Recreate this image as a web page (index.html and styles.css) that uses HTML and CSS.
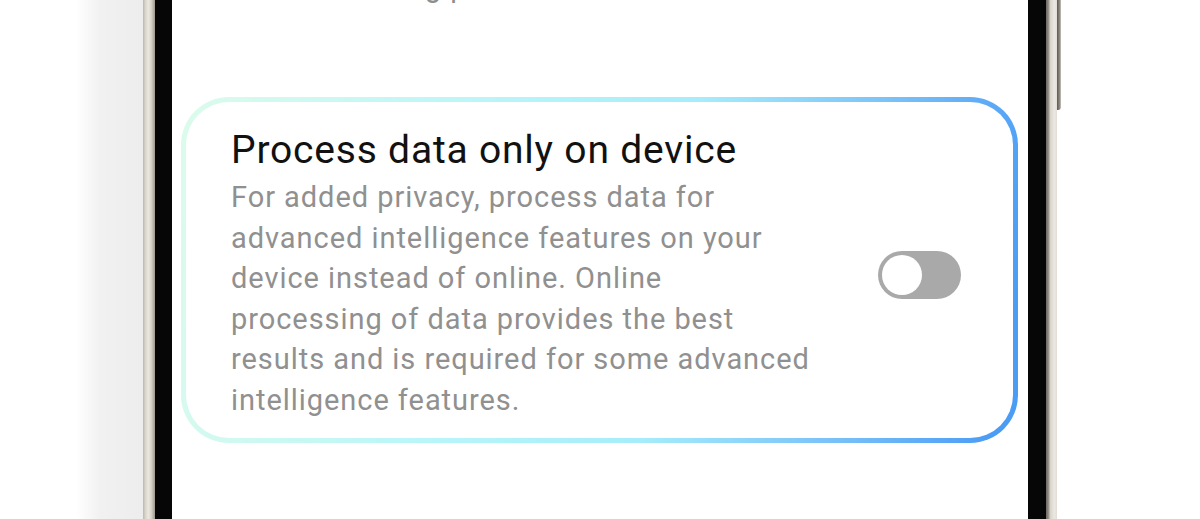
FILE: index.html
```html
<!DOCTYPE html>
<html lang="en">
<head>
<meta charset="utf-8">
<title>Process data only on device</title>
<link rel="stylesheet" href="styles.css">
</head>
<body>
<div class="stage">
  <div class="backdrop-left"></div>
  <div class="rail rail-left"></div>
  <div class="bezel bezel-left"></div>
  <main class="screen">
    <p class="prev-text">Enable learning processes on the device.</p>
    <section class="card">
      <div class="card-text">
        <h1 class="card-title">Process data only on device</h1>
        <p class="card-desc">For added privacy, process data for<br>advanced intelligence features on your<br>device instead of online. Online<br>processing of data provides the best<br>results and is required for some advanced<br>intelligence features.</p>
      </div>
      <div class="toggle" role="switch" aria-checked="false">
        <span class="toggle-thumb"></span>
      </div>
    </section>
  </main>
  <div class="bezel bezel-right"></div>
  <div class="rail rail-right"></div>
  <div class="side-right">
    <div class="side-button"></div>
  </div>
</div>
</body>
</html>
```

FILE: styles.css
```css
html, body {
  margin: 0;
  padding: 0;
  background: #ffffff;
}

.stage {
  display: flex;
  width: 1200px;
  height: 519px;
  overflow: hidden;
  font-family: Roboto, "Liberation Sans", sans-serif;
}

.backdrop-left {
  width: 143px;
  flex: none;
  background: linear-gradient(to right, #ffffff 0, #ffffff 76px, #f1f1f1 100px, #ededed 143px);
}

.rail {
  flex: none;
}

.rail-left {
  width: 12px;
  background: linear-gradient(to right, #bcb7ad 0%, #d9d5cc 20%, #ebe8e1 45%, #d6d1c7 70%, #9c978d 100%);
}

.bezel {
  flex: none;
  background: #060606;
}

.bezel-left {
  width: 17px;
}

.bezel-right {
  width: 18px;
}

.rail-right {
  width: 11px;
  background: linear-gradient(to right, #6c6861 0%, #8d8880 20%, #d8d4cb 40%, #ebe8e2 75%, #e2ded6 100%);
}

.side-right {
  width: 143px;
  flex: none;
  background: #ffffff;
}

.side-button {
  width: 4px;
  height: 110px;
  border-radius: 0 0 3px 0;
  background: linear-gradient(to right, #5e5a53 0%, #8a857c 60%, #c9c5bd 100%);
}

.screen {
  width: 856px;
  flex: none;
  box-sizing: border-box;
  padding: 0 10px 0 9px;
  background: #ffffff;
}

.prev-text {
  margin: -33px 0 0 0;
  padding-left: 50px;
  font-size: 29px;
  line-height: 40px;
  letter-spacing: 0.9px;
  color: #8e8e8e;
  white-space: nowrap;
}

.card {
  margin-top: 90px;
  height: 346px;
  box-sizing: border-box;
  display: flex;
  align-items: flex-start;
  padding: 24px 52px 18px 45px;
  border: 5px solid transparent;
  border-radius: 48px;
  background:
    linear-gradient(#ffffff, #ffffff) padding-box,
    linear-gradient(100deg, #dcfbec 0%, #b8f5f9 35%, #a6ecfb 58%, #7cc4f8 78%, #4b9cf5 97%) border-box;
}

.card-text {
  flex: 1;
  min-width: 0;
}

.card-title {
  margin: 0 0 3px 0;
  font-size: 39px;
  line-height: 48px;
  font-weight: 400;
  letter-spacing: 0.8px;
  color: #111111;
}

.card-desc {
  margin: 0;
  font-size: 29px;
  line-height: 40.5px;
  letter-spacing: 0.95px;
  color: #909090;
  white-space: nowrap;
}

.toggle {
  flex: none;
  align-self: center;
  margin-top: 4px;
  width: 83px;
  height: 48px;
  box-sizing: border-box;
  padding: 4px;
  border-radius: 24px;
  background: #a9a9a9;
  display: flex;
  align-items: center;
}

.toggle-thumb {
  width: 40px;
  height: 40px;
  border-radius: 50%;
  background: #ffffff;
}
```
